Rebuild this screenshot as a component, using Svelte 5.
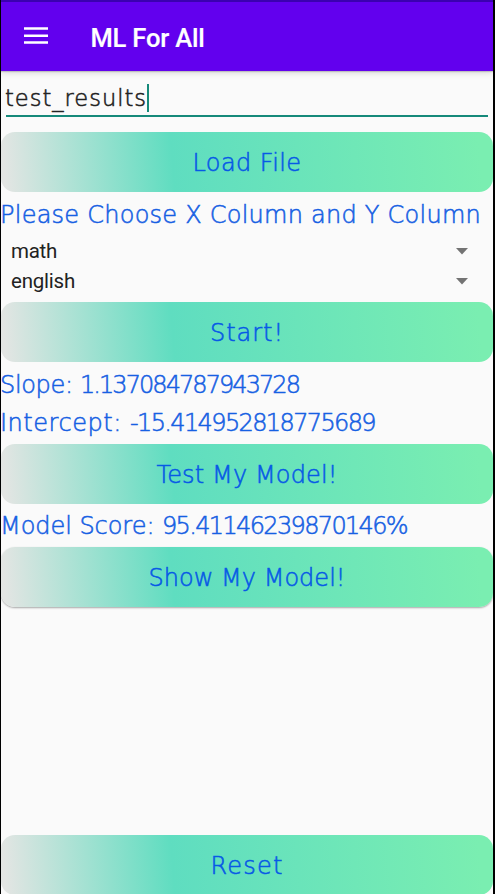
<script>
  let fileName = $state('test_results');
  const columns = ['math', 'english'];

  // Spreads the letters of a label over its design width.
  function fit(node, width) {
    const natural = node.getBoundingClientRect().width;
    node.style.letterSpacing = `${(width - natural) / node.textContent.length}px`;
  }
</script>

{#snippet action(label, width, raised = false)}
  <button class="action" class:raised><span class="script" use:fit={width}>{label}</span></button>
{/snippet}

{#snippet line(parts)}
  <p class="line">{#each parts as [label, width]}<span class="script" use:fit={width}>{label}</span>{/each}</p>
{/snippet}

<div class="screen">
  <header>
    <svg class="menu" width="24" height="18" viewBox="0 0 24 18" aria-label="Menu">
      <path d="M0 1.4h24M0 8.8h24M0 15.6h24" stroke="#fff" stroke-width="2.5" />
    </svg>
    <h1><span use:fit={114}>ML For All</span></h1>
  </header>
  <main>
    <div class="field">
      <span class="script" use:fit={142}>{fileName}</span><i class="caret"></i>
    </div>
    {@render action('Load File', 109)}
    <div class="prompt">{@render line([['Please Choose X Column and Y Column', 481]])}</div>
    <div class="selects">
      {#each columns as column, i}
        <div class="select">
          <span use:fit={i ? 64 : 46}>{column}</span>
          <svg width="12" height="7" viewBox="0 0 12 7"><path d="M0 0h12L6 6.5z" fill="#737373" /></svg>
        </div>
      {/each}
    </div>
    {@render action('Start!', 74)}
    <div class="result">
      {@render line([['Slope: ', 80], ['1.137084787943728', 219]])}
      {@render line([['Intercept: ', 130], ['-15.414952818775689', 245]])}
    </div>
    {@render action('Test My Model!', 181)}
    <div class="score">{@render line([['Model Score: ', 162], ['95.41146239870146%', 245]])}</div>
    {@render action('Show My Model!', 197, true)}
  </main>
  <footer>{@render action('Reset', 73)}</footer>
</div>

<style>
  :global(body) { background: #000; overflow: hidden; }
  .screen {
    box-sizing: border-box;
    width: 495px;
    height: 894px;
    border: solid #000;
    border-width: 0 2px 0 1px;
    background: #fafafa;
    display: flex;
    flex-direction: column;
    overflow: hidden;
    font-family: Roboto, sans-serif;
  }
  header {
    box-sizing: border-box;
    flex: none;
    height: 71px;
    border-top: 2px solid #3b00b0;
    background: #6200ee;
    box-shadow: 0 1px 1px #7775, 0 2px 6px #0002;
    display: flex;
    align-items: center;
    padding: 0 0 0 23px;
  }
  .menu { flex: none; margin-top: -1px; }
  h1 {
    margin: 3px 0 0 42.5px;
    font-size: 25.5px;
    line-height: 30px;
    font-weight: 500;
    color: #fff;
    white-space: nowrap;
    -webkit-text-stroke: 0.2px #fff;
  }
  main { flex: 1; }
  .script {
    display: inline-block;
    font-family: "DejaVu Sans", sans-serif;
    font-weight: 200;
    font-size: 24px;
    line-height: 30px;
    white-space: pre;
    -webkit-text-stroke: 0.55px currentColor;
  }
  .field {
    box-sizing: border-box;
    height: 46px;
    margin: 0 5px 15px;
    border-bottom: 2px solid #15897a;
    padding-top: 12px;
    display: flex;
    color: #222;
  }
  .field .script { font-size: 22.5px; margin-left: -1px; }
  .caret { width: 2px; height: 28px; margin-top: 1px; background: #15897a; }
  .action {
    box-sizing: border-box;
    width: 100%;
    height: 60px;
    border: 0;
    border-radius: 14px;
    background: linear-gradient(85deg, #e3e5e3 1%, #5fddc0 35%, #7aeeb1 97%);
    color: #0759e6;
    display: flex;
    justify-content: center;
    padding: 16px 0 0;
  }
  .raised { box-shadow: 0 1px 2px #0005; }
  .line { margin: 0 0 0 -1px; height: 37.5px; color: #1660e3; white-space: nowrap; }
  .prompt { height: 44px; margin-top: 0; padding-top: 8px; box-sizing: border-box; }
  .selects { height: 66px; }
  .select {
    height: 30px;
    display: flex;
    align-items: center;
    justify-content: space-between;
    padding: 0 25px 0 10px;
    font-size: 20.5px;
    color: #222;
  }
  .result { height: 82px; padding-top: 8px; box-sizing: border-box; }
  .score { height: 43px; padding-top: 7px; box-sizing: border-box; }
  footer { height: 59px; flex: none; }
</style>
